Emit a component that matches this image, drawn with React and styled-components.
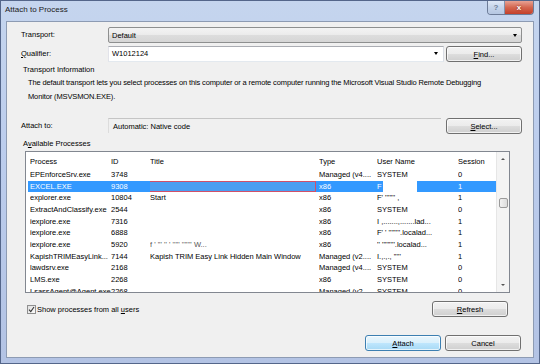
import React from "react";
import styled, { createGlobalStyle, css } from "styled-components";

const GlobalStyle = createGlobalStyle`
  html, body {
    margin: 0;
    padding: 0;
    width: 540px;
    height: 364px;
    overflow: hidden;
    background: #b9cae6;
  }
  body {
    font-family: "Liberation Sans", Arial, sans-serif;
    font-size: 7.5px;
    color: #000;
  }
`;

const processes = [
  { name: "EPEnforceSrv.exe", id: "3748", title: "", type: "Managed (v4....", user: "SYSTEM", session: "0" },
  { name: "EXCEL.EXE", id: "9308", title: "", type: "x86", user: "F", session: "1", selected: true },
  { name: "explorer.exe", id: "10804", title: "Start", type: "x86", user: "F' ''''''' ,", session: "1" },
  { name: "ExtractAndClassify.exe", id: "2544", title: "", type: "x86", user: "SYSTEM", session: "0" },
  { name: "iexplore.exe", id: "7316", title: "", type: "x86", user: "I   ,.......,.......lad...", session: "1" },
  { name: "iexplore.exe", id: "6888", title: "", type: "x86", user: "F' ' ''''''''.localad...", session: "1" },
  { name: "iexplore.exe", id: "5920", title: "f    ' ''' ''     '  '''''   '''''''    W...", type: "x86", user: "''  '''''''''.localad...", session: "1" },
  { name: "KapishTRIMEasyLink...", id: "7144", title: "Kapish TRIM Easy Link Hidden Main Window", type: "Managed (v2....", user: "I.,.,.,  '''''", session: "1" },
  { name: "lawdsrv.exe", id: "2168", title: "", type: "Managed (v4....", user: "SYSTEM", session: "0" },
  { name: "LMS.exe", id: "2268", title: "", type: "x86", user: "SYSTEM", session: "0" },
  { name: "LsassAgent@Agent.exe", id: "2268", title: "", type: "Managed (v2....", user: "SYSTEM", session: "0" },
];

const Window = styled.div`
  width: 540px;
  height: 364px;
  box-sizing: border-box;
  display: flex;
  flex-direction: column;
  border: 1px solid #54668a;
  background: linear-gradient(180deg, #c5d5ee 0%, #bccded 40%, #b3c3e4 100%);
`;

const TitleBar = styled.div`
  height: 20px;
  display: flex;
  align-items: flex-start;
  justify-content: space-between;
  padding-left: 4px;
`;

const Title = styled.div`
  font-size: 8px;
  line-height: 12px;
  padding-top: 3px;
  color: #1a1a1a;
`;

const CaptionButtons = styled.div`
  display: flex;
  margin-right: 5px;
  border: 1px solid #6d7c98;
  border-top: none;
  border-radius: 0 0 4px 4px;
  overflow: hidden;
`;

const CaptionBtn = styled.div`
  height: 13px;
  width: ${(p) => (p.$close ? "28px" : "16px")};
  display: flex;
  align-items: center;
  justify-content: center;
  font-size: 8px;
  font-weight: bold;
  color: #fff;
  ${(p) =>
    p.$close
      ? css`
          background: linear-gradient(180deg, #e8a293 0%, #d4664f 50%, #c4402a 100%);
          text-shadow: 0 0 2px #7a1a10;
        `
      : css`
          background: linear-gradient(180deg, #dfe8f6 0%, #c5d4ea 50%, #b6c7e2 100%);
          color: #6f7f9a;
          border-right: 1px solid #8292ad;
        `}
`;

const Client = styled.div`
  flex: 1;
  margin: 0 5px 5px 5px;
  background: #f0f0f0;
  border: 1px solid #8d9bb3;
  padding: 5px 11px 0 14px;
  display: flex;
  flex-direction: column;
`;

const FieldRow = styled.div`
  display: grid;
  grid-template-columns: 87px 1fr;
  align-items: center;
  margin-top: ${(p) => p.$top || 0}px;
`;

const Label = styled.div`
  line-height: 16px;
`;

const Combo = styled.div`
  height: 16px;
  box-sizing: border-box;
  border: 1px solid #8e8f8f;
  border-radius: 2px;
  background: linear-gradient(180deg, #f4f4f4 0%, #ebebeb 50%, #dddddd 51%, #d6d6d6 100%);
  display: flex;
  align-items: center;
  justify-content: space-between;
  padding: 0 4px 0 3px;
`;

const Arrow = styled.span`
  width: 0;
  height: 0;
  border-left: 2.5px solid transparent;
  border-right: 2.5px solid transparent;
  border-top: 3px solid #000;
`;

const Split = styled.div`
  display: flex;
  align-items: center;
  gap: 2px;
`;

const TextInput = styled.div`
  flex: 1;
  height: 16px;
  box-sizing: border-box;
  background: #fff;
  border: 1px solid #abadb3;
  border-color: #abadb3 #dbdfe6 #e3e9ef #e2e3ea;
  display: flex;
  align-items: center;
  justify-content: space-between;
  padding: 0 5px 0 3px;
`;

const ReadOnly = styled.div`
  flex: 1;
  height: 15px;
  box-sizing: border-box;
  border-top: 1px solid #c5c5c5;
  border-left: 1px solid #dcdcdc;
  background: #f0f0f0;
  display: flex;
  align-items: center;
  padding-left: 4px;
  margin-right: 3px;
`;

const Button = styled.div`
  width: 76px;
  height: 16px;
  box-sizing: border-box;
  border: 1px solid ${(p) => (p.$default ? "#3c7fb1" : "#707070")};
  border-radius: 3px;
  background: ${(p) =>
    p.$default
      ? "linear-gradient(180deg, #eaf6fd 0%, #d9f0fc 50%, #bee6fd 51%, #a7d9f5 100%)"
      : "linear-gradient(180deg, #f2f2f2 0%, #ebebeb 50%, #dddddd 51%, #cfcfcf 100%)"};
  box-shadow: inset 0 0 0 1px rgba(255, 255, 255, 0.7);
  display: flex;
  align-items: center;
  justify-content: center;
  margin-top: ${(p) => p.$top || 0}px;
`;

const InfoTitle = styled.div`
  line-height: 12px;
  margin: 2px 0 0 2px;
`;

const InfoText = styled.div`
  line-height: 14px;
  margin-left: 7px;
  letter-spacing: -0.13px;
  white-space: nowrap;
`;

const GroupLabel = styled.div`
  line-height: 12px;
  margin: 4px 0 1px 2px;
`;

const ListBox = styled.div`
  width: 485px;
  height: 142px;
  box-sizing: border-box;
  margin-left: 4px;
  border: 1px solid #828790;
  background: #fff;
  display: flex;
`;

const ListContent = styled.div`
  flex: 1;
  overflow: hidden;
  padding-left: 2px;
`;

const Columns = styled.div`
  display: grid;
  grid-template-columns: 81px 39px 169px 58px 81px 39px;
  padding-left: 2px;
  white-space: nowrap;
`;

const Header = styled(Columns)`
  height: 17px;
  align-items: center;
  padding-top: 1px;
  box-sizing: border-box;
`;

const Row = styled(Columns)`
  height: 11.67px;
  line-height: 11.67px;
  background: ${(p) => (p.$selected ? "#3399ff" : "transparent")};
  color: ${(p) => (p.$selected ? "#fff" : "#000")};
`;

const Cell = styled.div`
  overflow: hidden;
  text-overflow: clip;
  color: ${(p) => (p.$faint ? "#555" : "inherit")};
`;

const Redact = styled.span`
  display: inline-block;
  vertical-align: top;
  height: 11px;
  width: ${(p) => p.$w}px;
  margin-left: ${(p) => p.$ml || 0}px;
  box-sizing: border-box;
  background: ${(p) => p.$bg};
  border: ${(p) => p.$border || "none"};
`;

const Scrollbar = styled.div`
  width: 12px;
  border-left: 1px solid #e6e6e6;
  background: #f4f4f4;
  display: flex;
  flex-direction: column;
  align-items: center;
`;

const ScrollArrow = styled.span`
  margin: ${(p) => (p.$down ? "auto 0 6px" : "6px 0 0")};
  width: 0;
  height: 0;
  border-left: 2px solid transparent;
  border-right: 2px solid transparent;
  ${(p) => (p.$down ? "border-top: 2px solid #555;" : "border-bottom: 2px solid #555;")}
`;

const Thumb = styled.div`
  margin-top: 38px;
  width: 9px;
  height: 10px;
  box-sizing: border-box;
  border: 1px solid #9a9a9a;
  border-radius: 2px;
  background: linear-gradient(90deg, #f2f2f2, #dcdcdc);
`;

const BottomRow = styled.div`
  display: flex;
  align-items: center;
  justify-content: space-between;
  margin: 8px 14px 0 6px;
`;

const CheckLabel = styled.div`
  display: flex;
  align-items: center;
  gap: 1px;
`;

const CheckBox = styled.div`
  width: 9px;
  height: 9px;
  box-sizing: border-box;
  border: 1px solid #8f8f8f;
  background: linear-gradient(135deg, #e0e0e0, #fafafa);
  display: flex;
  align-items: center;
  justify-content: center;
`;

const DialogButtons = styled.div`
  display: flex;
  justify-content: flex-end;
  gap: 4px;
  margin: 18px 1px 0 0;
`;

const U = styled.span`
  text-decoration: underline;
`;

export default function App() {
  return (
    <>
      <GlobalStyle />
      <Window>
        <TitleBar>
          <Title>Attach to Process</Title>
          <CaptionButtons>
            <CaptionBtn>?</CaptionBtn>
            <CaptionBtn $close>x</CaptionBtn>
          </CaptionButtons>
        </TitleBar>
        <Client>
          <FieldRow>
            <Label>Transport:</Label>
            <Combo>
              <span>Default</span>
              <Arrow />
            </Combo>
          </FieldRow>
          <FieldRow $top={2}>
            <Label>
              <U>Q</U>ualifier:
            </Label>
            <Split>
              <TextInput>
                <span>W1012124</span>
                <Arrow />
              </TextInput>
              <Button $top={1}>
                <span>
                  <U>F</U>ind...
                </span>
              </Button>
            </Split>
          </FieldRow>
          <InfoTitle>Transport Information</InfoTitle>
          <InfoText>
            The default transport lets you select processes on this computer or a remote computer running the
            Microsoft Visual Studio Remote Debugging
            <br />
            Monitor (MSVSMON.EXE).
          </InfoText>
          <FieldRow $top={13}>
            <Label>Attach to:</Label>
            <Split>
              <ReadOnly>Automatic: Native code</ReadOnly>
              <Button $top={1}>
                <span>
                  <U>S</U>elect...
                </span>
              </Button>
            </Split>
          </FieldRow>
          <GroupLabel>
            A<U>v</U>ailable Processes
          </GroupLabel>
          <ListBox>
            <ListContent>
              <Header>
                <Cell>Process</Cell>
                <Cell>ID</Cell>
                <Cell>Title</Cell>
                <Cell>Type</Cell>
                <Cell>User Name</Cell>
                <Cell>Session</Cell>
              </Header>
              {processes.map((p, i) => (
                <Row key={i} $selected={p.selected}>
                  <Cell>{p.name}</Cell>
                  <Cell>{p.id}</Cell>
                  <Cell $faint={i === 6}>
                    {p.selected ? (
                      <Redact $w={172} $ml={-6} $bg="#4a9ef2" $border="1px solid #d0506a" />
                    ) : (
                      p.title
                    )}
                  </Cell>
                  <Cell>{p.type}</Cell>
                  <Cell>
                    {p.user}
                    {p.selected && <Redact $w={34} $ml={1} $bg="#fff" />}
                  </Cell>
                  <Cell>{p.session}</Cell>
                </Row>
              ))}
            </ListContent>
            <Scrollbar>
              <ScrollArrow />
              <Thumb />
              <ScrollArrow $down />
            </Scrollbar>
          </ListBox>
          <BottomRow>
            <CheckLabel>
              <CheckBox>
                <svg width="7" height="7" viewBox="0 0 7 7">
                  <path d="M1 3.6 L2.8 5.6 L6 1" fill="none" stroke="#333" strokeWidth="1.1" />
                </svg>
              </CheckBox>
              <span>
                Show processes from all <U>u</U>sers
              </span>
            </CheckLabel>
            <Button>
              <span>
                <U>R</U>efresh
              </span>
            </Button>
          </BottomRow>
          <DialogButtons>
            <Button $default>
              <span>
                <U>A</U>ttach
              </span>
            </Button>
            <Button>Cancel</Button>
          </DialogButtons>
        </Client>
      </Window>
    </>
  );
}
